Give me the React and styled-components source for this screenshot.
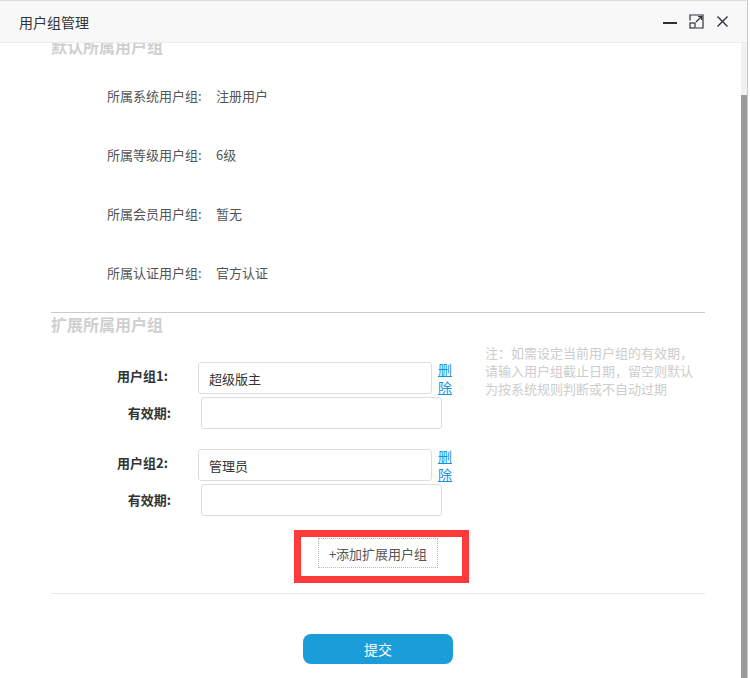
import React, { useLayoutEffect, useRef, useState } from "react";
import styled, { createGlobalStyle } from "styled-components";

const Global = createGlobalStyle`
  html, body { margin: 0; padding: 0; background: #fff; }
  body {
    font-family: "Noto Sans CJK SC", "Liberation Sans", sans-serif;
    font-size: 13px;
    color: #333;
  }
  * { box-sizing: border-box; }
`;

const Page = styled.div`
  display: flex;
  width: 750px;
  height: 678px;
  overflow: hidden;
`;

const Dialog = styled.div`
  width: 748px;
  height: 678px;
  display: flex;
  flex-direction: column;
  border-top: 1px solid #dcdcdc;
  border-right: 1px solid #c8c8c8;
  background: #fff;
`;

const TitleBar = styled.div`
  height: 42px;
  flex: none;
  display: flex;
  align-items: center;
  padding: 0 19px;
  background: #f8f8f8;
  border-bottom: 1px solid #ececec;
`;

const Title = styled.div`
  flex: 1;
  font-size: 14px;
  color: #333;
  line-height: 20px;
`;

const TitleTools = styled.div`
  display: flex;
  align-items: center;
  gap: 12px;
  margin-right: -1px;
`;

const ToolIcon = styled.svg`
  display: block;
  color: #2f2f3a;
`;

const Body = styled.div`
  flex: 1;
  display: flex;
  min-height: 0;
`;

const Viewport = styled.div`
  flex: 1;
  overflow: hidden;
  height: 100%;
`;

const Track = styled.div`
  width: 6px;
  flex: none;
  background: #f1f1f1;
  position: relative;
`;

const Thumb = styled.div`
  position: absolute;
  left: 0;
  width: 6px;
  background: #9a9a9a;
`;

const Content = styled.div`
  padding: 50px 36px 14px 51px;
`;

const SectionHeading = styled.div`
  font-size: 16px;
  font-weight: bold;
  color: #cfcfcf;
  line-height: ${(p) => (p.$ruled ? "22px" : "20px")};
  border-top: ${(p) => (p.$ruled ? "1px solid #cccccc" : "none")};
  margin-top: ${(p) => p.$mt || 0}px;
`;

const InfoList = styled.div`
  display: flex;
  flex-direction: column;
  gap: 39px;
  margin-top: 30px;
  padding-left: 56px;
`;

const InfoRow = styled.div`
  display: grid;
  grid-template-columns: 109px auto;
  line-height: 20px;
  color: #555;
  font-size: 13px;
`;

const FormArea = styled.div`
  display: flex;
  margin-top: 9px;
  padding-left: 27px;
`;

const Groups = styled.div`
  width: 374px;
  padding-top: 18px;
  display: flex;
  flex-direction: column;
`;

const Row = styled.div`
  display: flex;
  align-items: ${(p) => (p.$group ? "flex-start" : "center")};
  height: 32px;
  margin-top: ${(p) => p.$mt || 0}px;
  margin-left: ${(p) => p.$indent || 0}px;
`;

const Label = styled.div`
  width: 90px;
  flex: none;
  text-align: right;
  font-weight: bold;
  color: #333;
  line-height: 20px;
  padding-top: ${(p) => (p.$group ? 4 : 0)}px;
  margin-right: 30px;
`;

const Field = styled.div`
  width: ${(p) => p.$w}px;
  height: 32px;
  flex: none;
  border: 1px solid #dedede;
  border-radius: 3px;
  padding-left: 10px;
  display: flex;
  align-items: center;
  color: #333;
  font-size: 13px;
`;

const DeleteLink = styled.a`
  width: 14px;
  margin-left: 6px;
  margin-top: -2px;
  font-size: 14px;
  line-height: 18px;
  color: #1a90e0;
  text-decoration: underline;
  word-break: break-all;
  cursor: pointer;
`;

const Note = styled.div`
  width: 212px;
  margin-left: 33px;
  color: #cdcdcd;
  font-size: 13px;
  line-height: 18px;
`;

const AddWrap = styled.div`
  display: flex;
  justify-content: center;
  margin-top: 22px;
`;

const AddHolder = styled.div`
  position: relative;
`;

const AddButton = styled.div`
  width: 120px;
  height: 30px;
  border: 1px dotted #b8b8b8;
  display: flex;
  align-items: center;
  justify-content: center;
  color: #555;
  font-size: 13px;
`;

const Highlight = styled.div`
  position: absolute;
  left: -24px;
  top: -8px;
  width: 175px;
  height: 53px;
  border: 7px solid #ff3a3a;
  pointer-events: none;
`;

const Divider = styled.div`
  height: 1px;
  background: #e8e8e8;
  margin-top: 25px;
`;

const SubmitWrap = styled.div`
  display: flex;
  justify-content: center;
  margin-top: 40px;
`;

const Submit = styled.button`
  width: 150px;
  height: 30px;
  border: none;
  border-radius: 8px;
  background: #1a9dd8;
  color: #fff;
  font-family: inherit;
  font-size: 14px;
  padding: 0;
`;

const infos = [
  ["所属系统用户组:", "注册用户"],
  ["所属等级用户组:", "6级"],
  ["所属会员用户组:", "暂无"],
  ["所属认证用户组:", "官方认证"],
];

const groups = [
  { label: "用户组1:", value: "超级版主" },
  { label: "用户组2:", value: "管理员" },
];

export default function App() {
  const vp = useRef(null);
  const [thumb, setThumb] = useState({ top: 52, height: 583 });

  useLayoutEffect(() => {
    const el = vp.current;
    if (!el) return;
    el.scrollTop = el.scrollHeight;
    const h = el.clientHeight;
    const total = el.scrollHeight;
    setThumb({
      top: (el.scrollTop * h) / total,
      height: (h * h) / total,
    });
  }, []);

  return (
    <Page>
      <Global />
      <Dialog>
        <TitleBar>
          <Title>用户组管理</Title>
          <TitleTools>
            <ToolIcon width="14" height="14" viewBox="0 0 14 14">
              <rect x="0" y="7" width="14" height="2" fill="currentColor" />
            </ToolIcon>
            <ToolIcon width="15" height="15" viewBox="0 0 15 15" fill="none" stroke="currentColor" strokeWidth="1.2">
              <path d="M1 6.5V1H14V14H7" />
              <rect x="1" y="9" width="5" height="5" />
              <path d="M7 8L12.5 2.5" />
              <path d="M9 2.5H12.5V6" />
            </ToolIcon>
            <ToolIcon width="13" height="13" viewBox="0 0 13 13" fill="none" stroke="currentColor" strokeWidth="1.4">
              <path d="M1.5 1.5L11.5 11.5M11.5 1.5L1.5 11.5" />
            </ToolIcon>
          </TitleTools>
        </TitleBar>
        <Body>
          <Viewport ref={vp}>
            <Content>
              <SectionHeading>默认所属用户组</SectionHeading>
              <InfoList>
                {infos.map(([k, v]) => (
                  <InfoRow key={k}>
                    <span>{k}</span>
                    <span>{v}</span>
                  </InfoRow>
                ))}
              </InfoList>
              <SectionHeading $ruled $mt={29}>扩展所属用户组</SectionHeading>
              <FormArea>
                <Groups>
                  {groups.map((g, i) => (
                    <React.Fragment key={g.label}>
                      <Row $group $mt={i === 0 ? 0 : 20}>
                        <Label $group>{g.label}</Label>
                        <Field $w={234}>{g.value}</Field>
                        <DeleteLink>删除</DeleteLink>
                      </Row>
                      <Row $mt={3} $indent={3}>
                        <Label>有效期:</Label>
                        <Field $w={241} />
                      </Row>
                    </React.Fragment>
                  ))}
                </Groups>
                <Note>注：如需设定当前用户组的有效期，请输入用户组截止日期，留空则默认为按系统规则判断或不自动过期</Note>
              </FormArea>
              <AddWrap>
                <AddHolder>
                  <AddButton>+添加扩展用户组</AddButton>
                  <Highlight />
                </AddHolder>
              </AddWrap>
              <Divider />
              <SubmitWrap>
                <Submit>提交</Submit>
              </SubmitWrap>
            </Content>
          </Viewport>
          <Track>
            <Thumb style={{ top: thumb.top, height: thumb.height }} />
          </Track>
        </Body>
      </Dialog>
    </Page>
  );
}
